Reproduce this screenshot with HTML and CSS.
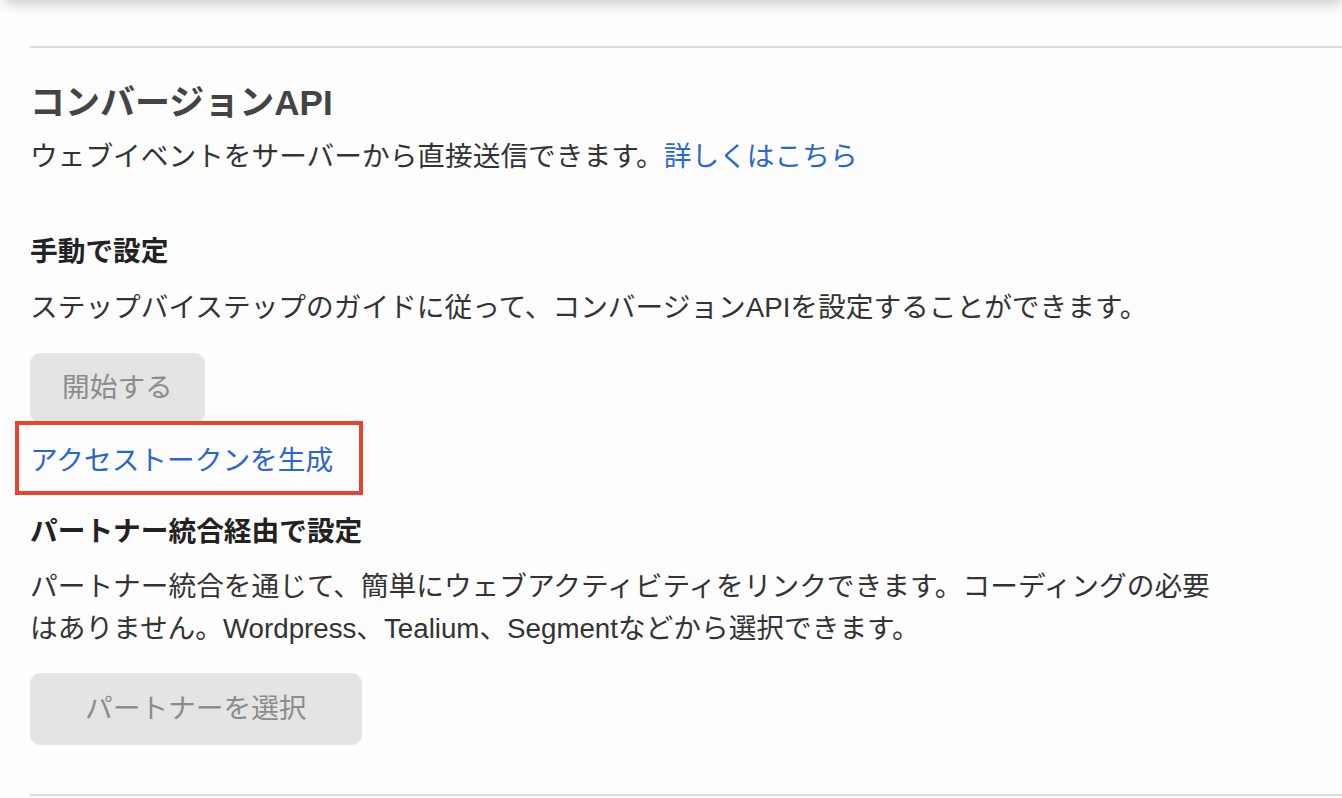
FILE: index.html
```html
<!DOCTYPE html>
<html lang="ja">
<head>
<meta charset="utf-8">
<title>コンバージョンAPI</title>
<link rel="stylesheet" href="styles.css">
</head>
<body>
<div class="topbar"></div>
<main class="page">
  <div class="divider"></div>
  <section class="section">
    <h1 class="title">コンバージョンAPI</h1>
    <p class="lead">ウェブイベントをサーバーから直接送信できます。<a class="link" href="#">詳しくはこちら</a></p>

    <h2 class="subheading subheading-first">手動で設定</h2>
    <p class="text">ステップバイステップのガイドに従って、コンバージョンAPIを設定することができます。</p>
    <button class="btn btn-start" disabled>開始する</button>
    <div class="link-row">
      <a class="link" href="#">アクセストークンを生成</a>
      <span class="highlight"></span>
    </div>

    <h2 class="subheading subheading-partner">パートナー統合経由で設定</h2>
    <p class="text text-partner">パートナー統合を通じて、簡単にウェブアクティビティをリンクできます。コーディングの必要はありません。Wordpress、Tealium、Segmentなどから選択できます。</p>
    <button class="btn btn-partner" disabled>パートナーを選択</button>
  </section>
  <div class="divider divider-bottom"></div>
</main>
</body>
</html>
```

FILE: styles.css
```css
html, body {
  margin: 0;
  padding: 0;
  background: #fdfdfd;
  overflow: hidden;
}

body {
  font-family: "Liberation Sans", "Noto Sans CJK JP", sans-serif;
  color: #333333;
}

.topbar {
  height: 20px;
  margin-top: -20px;
  margin-left: 5px;
  background: #ffffff;
  box-shadow: 0 3px 14px rgba(0, 0, 0, 0.22);
}

.page {
  padding-top: 46px;
  padding-left: 30px;
}

.divider {
  height: 2px;
  background: #dcdde2;
}

.section {
  padding-top: 33px;
}

.title {
  margin: 0 0 11px;
  font-size: 35px;
  line-height: 44px;
  font-weight: 700;
  color: #444444;
}

.lead,
.text {
  margin: 0;
  font-size: 27.7px;
  line-height: 42px;
  color: #333333;
}

.link {
  color: #2b66cc;
  text-decoration: none;
}

.subheading {
  margin: 0;
  font-size: 27.7px;
  line-height: 42px;
  font-weight: 700;
  color: #222222;
}

.subheading-first {
  margin-top: 53px;
}

.text {
  margin-top: 14px;
}

.btn {
  display: block;
  height: 70px;
  margin-top: 24px;
  padding: 0 32px;
  border: none;
  border-radius: 11px;
  background: #e4e4e4;
  color: #8c8c8c;
  font-family: "Liberation Sans", "Noto Sans CJK JP", sans-serif;
  font-size: 27.7px;
  line-height: 42px;
}

.link-row {
  position: relative;
  margin-top: 17px;
  font-size: 27.7px;
  line-height: 42px;
}

.highlight {
  position: absolute;
  left: -15px;
  top: -19px;
  width: 340px;
  height: 66px;
  border: 4px solid #e8432e;
  pointer-events: none;
}

.subheading-partner {
  margin-top: 29px;
}

.text-partner {
  margin-top: 13px;
  width: 1205px;
}

.btn-partner {
  height: 72px;
  margin-top: 23px;
  padding: 0 55px;
}

.divider-bottom {
  margin-top: 49px;
}
```
